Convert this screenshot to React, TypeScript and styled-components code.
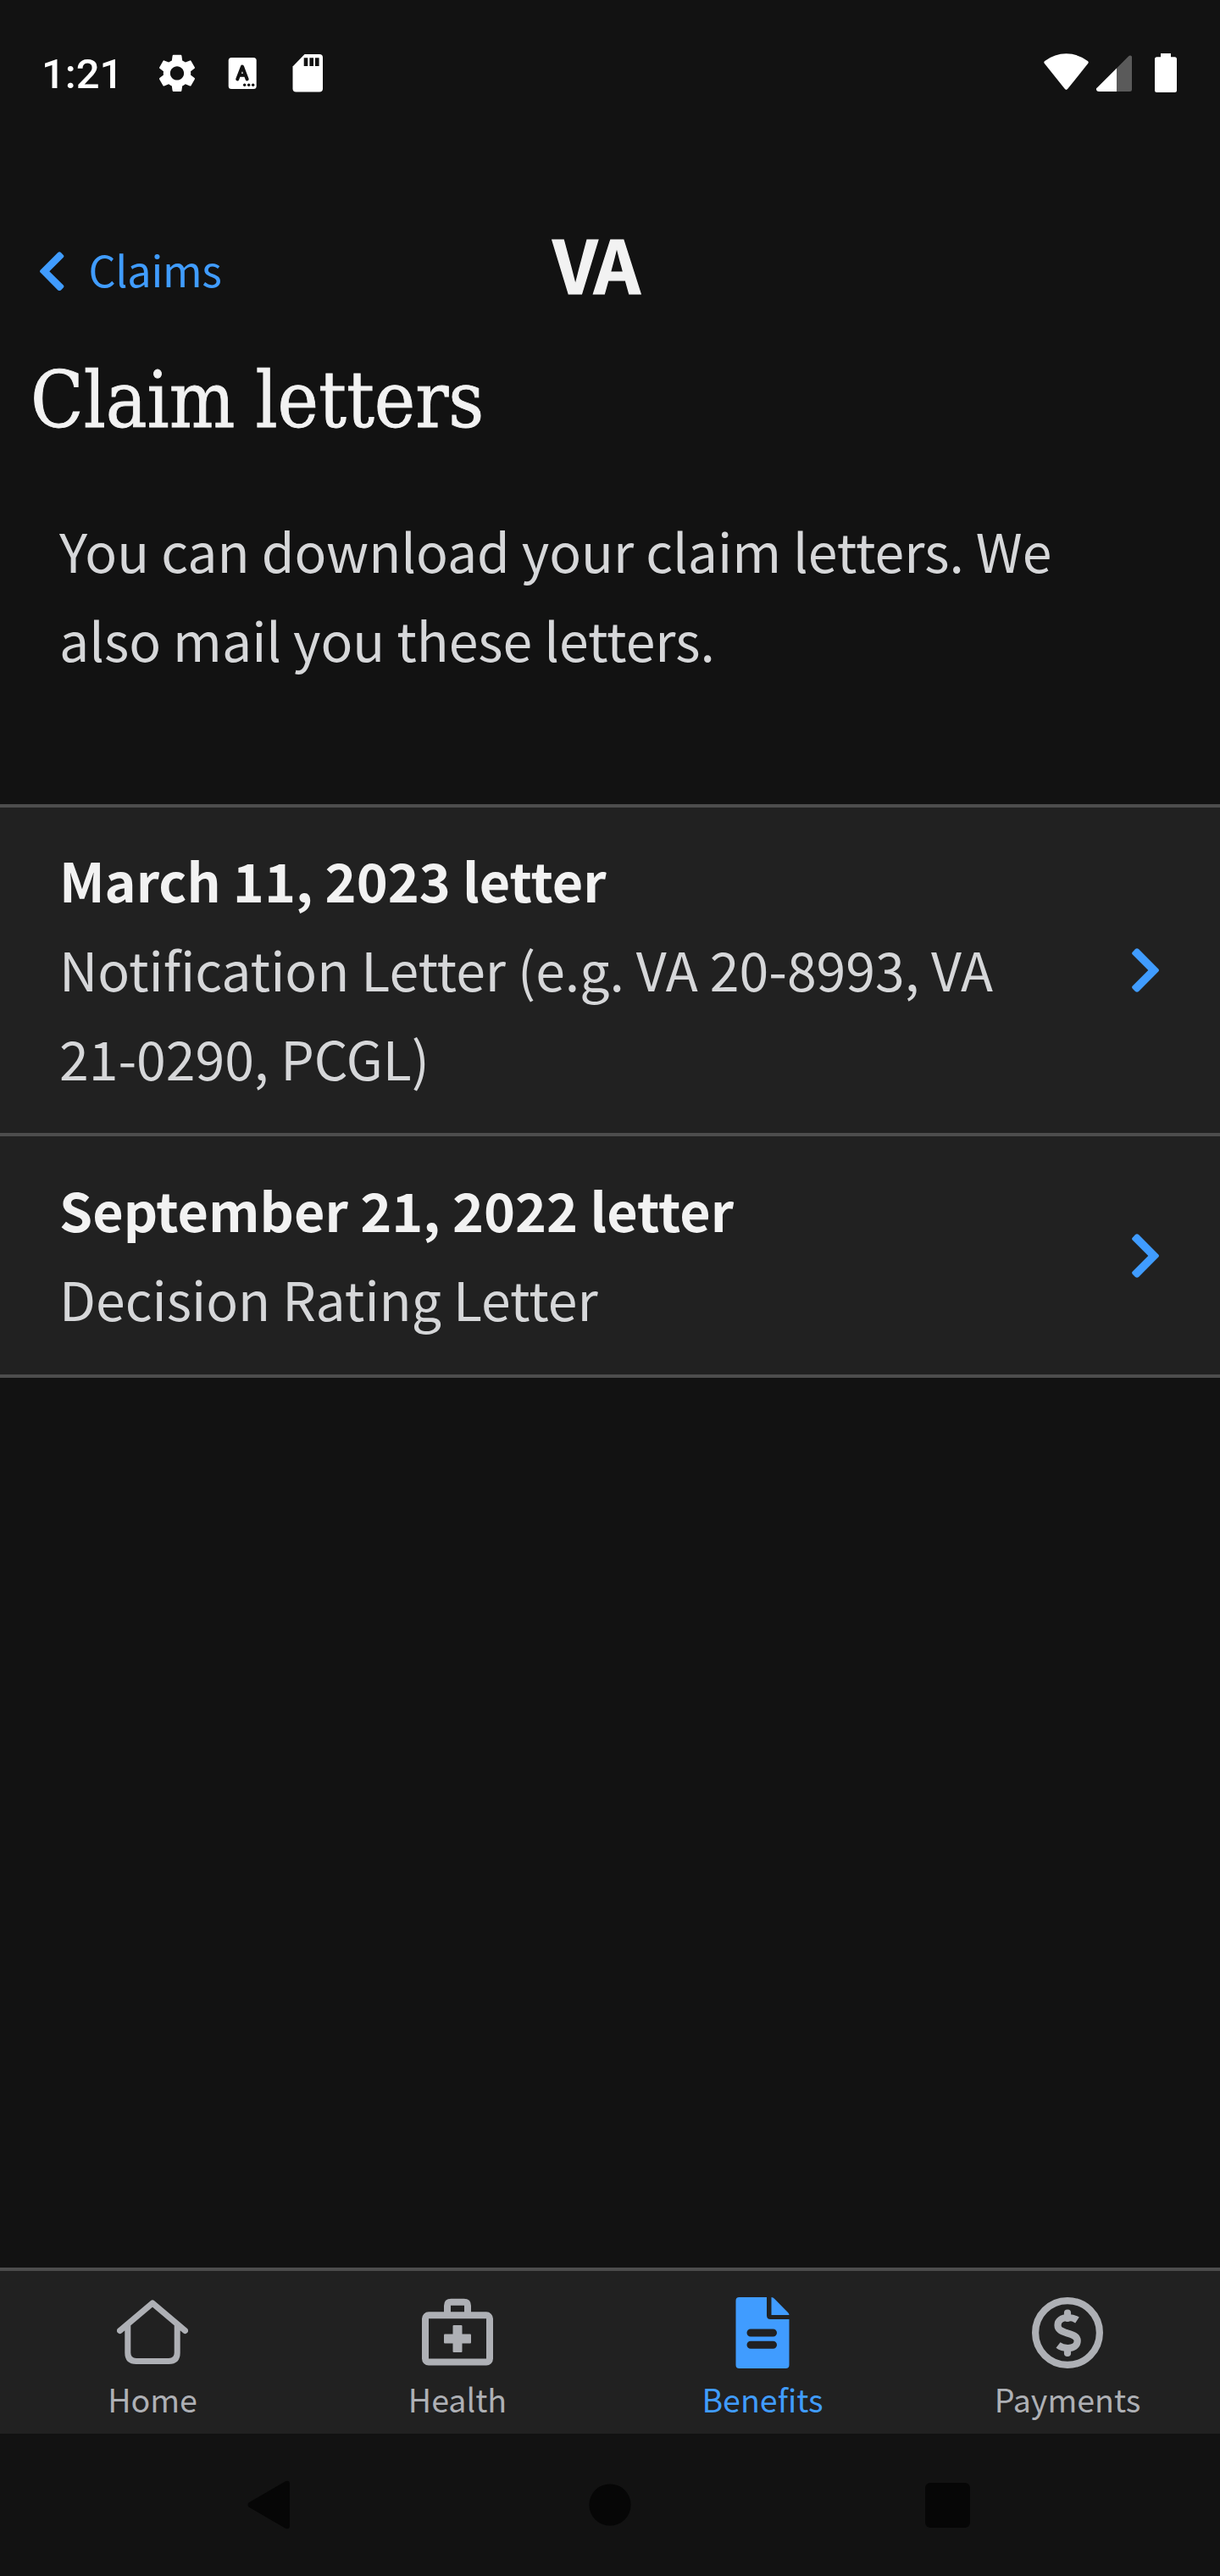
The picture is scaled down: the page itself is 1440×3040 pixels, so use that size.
import React from 'react';
import styled, { createGlobalStyle } from 'styled-components';

const color = {
  page: '#121212',
  surface: '#212121',
  line: '#4d4d4d',
  text: '#f2f2f2',
  body: '#d6d7d9',
  muted: '#aeb0b5',
  link: '#409cff',
  sys: '#060606',
};
const sans = '"Noto Sans CJK SC", "Noto Sans", sans-serif';

const Global = createGlobalStyle`
  html, body { margin: 0; background: ${color.page}; }
  * { box-sizing: border-box; }
  svg { display: block; flex: none; }
`;

const Screen = styled.div`
  width: 1440px;
  height: 3040px;
  display: flex;
  flex-direction: column;
  background: ${color.page};
  font-family: ${sans};
  color: ${color.text};
  overflow: hidden;
`;

const StatusBar = styled.div`
  height: 172px;
  flex: none;
  display: flex;
  align-items: flex-start;
  justify-content: space-between;
  padding: 60px 48px 0 49px;
`;
const StatusGroup = styled.div`
  display: flex;
`;
const Clock = styled.div`
  width: 133.3px;
  font: 500 49px/56px Roboto, sans-serif;
  color: #fff;
`;

const Header = styled.header`
  height: 228px;
  flex: none;
  display: grid;
  grid-template-columns: 1fr auto 1fr;
  padding: 92px 82px 0 47px;
`;
const Back = styled.a`
  display: flex;
  height: 100px;
  margin-top: 6px;
  align-items: center;
  color: ${color.link};
  font-size: 50.4px;
  letter-spacing: -0.3px;
  gap: 29px;
`;
const BackLabel = styled.span`
  line-height: 100px;
  margin-top: -5px;
`;
const Logo = styled.div`
  font-size: 86px;
  line-height: 92px;
  font-weight: 700;
  letter-spacing: -3px;
  -webkit-text-stroke: 1.2px ${color.text};
`;

const Title = styled.h1`
  margin: 0;
  height: 180px;
  flex: none;
  padding-left: 36px;
  font: 400 91px/146px "DejaVu Serif Condensed", "DejaVu Serif", serif;
  font-stretch: condensed;
  word-spacing: -2px;
  white-space: nowrap;
  -webkit-text-stroke: 0.8px ${color.text};
`;
const Intro = styled.p`
  margin: 0;
  height: 369px;
  flex: none;
  padding: 16px 150px 0 70px;
  font-size: 62.5px;
  line-height: 105px;
  color: ${color.body};
`;

const List = styled.div`
  flex: none;
  border-top: 4px solid ${color.line};
`;
const Row = styled.div<{ $height: number }>`
  height: ${(p) => p.$height}px;
  display: flex;
  align-items: center;
  justify-content: space-between;
  padding: 0 72px 0 70px;
  background: ${color.surface};
  border-bottom: 4px solid ${color.line};
`;
const RowText = styled.div`
  width: 1140px;
  padding-bottom: 5px;
  font-size: 62.5px;
  line-height: 105px;
  color: ${color.body};
`;
const RowTitle = styled.div`
  font-size: 62.8px;
  font-weight: 700;
  color: ${color.text};
`;
const Spacer = styled.div`
  flex: 1;
`;

const TabBar = styled.nav`
  height: 196px;
  flex: none;
  display: grid;
  grid-template-columns: repeat(4, 1fr);
  background: ${color.surface};
  border-top: 4px solid ${color.line};
`;
const Tab = styled.div<{ $active?: boolean }>`
  display: flex;
  flex-direction: column;
  align-items: center;
  padding-top: 31px;
  color: ${(p) => (p.$active ? color.link : color.muted)};
`;
const TabLabel = styled.span`
  margin-top: 6px;
  font-size: 37.6px;
  line-height: 60px;
`;

const SystemNav = styled.div`
  height: 168px;
  flex: none;
  display: flex;
  justify-content: space-between;
  align-items: center;
  padding: 0 295px 0 292px;
`;

const GearIcon = () => (
  <svg width="54" height="54" viewBox="0 0.25 24 24" fill="#fff">
    <path d="M19.14 12.94c.04-.3.06-.61.06-.94 0-.32-.02-.64-.07-.94l2.03-1.58c.18-.14.23-.41.12-.61l-1.92-3.32c-.12-.22-.37-.29-.59-.22l-2.39.96c-.5-.38-1.03-.7-1.62-.94l-.36-2.54c-.04-.24-.24-.41-.48-.41h-3.84c-.24 0-.43.17-.47.41l-.36 2.54c-.59.24-1.13.57-1.62.94l-2.39-.96c-.22-.08-.47 0-.59.22L2.74 8.87c-.12.21-.08.47.12.61l2.03 1.58c-.05.3-.09.63-.09.94s.02.64.07.94l-2.03 1.58c-.18.14-.23.41-.12.61l1.92 3.32c.12.22.37.29.59.22l2.39-.96c.5.38 1.03.7 1.62.94l.36 2.54c.05.24.24.41.48.41h3.84c.24 0 .44-.17.47-.41l.36-2.54c.59-.24 1.13-.56 1.62-.94l2.39.96c.22.08.47 0 .59-.22l1.92-3.32c.12-.22.07-.47-.12-.61l-2.01-1.58zM12 15.6c-1.98 0-3.6-1.62-3.6-3.6s1.62-3.6 3.6-3.6 3.6 1.62 3.6 3.6-1.62 3.6-3.6 3.6z" />
  </svg>
);
const KeyboardIcon = () => (
  <svg width="81.700" height="54" viewBox="-11.700 0 81.700 54">
    <rect x="22" y="8" width="33" height="37" rx="3.5" fill="#fff" />
    <path d="M32.5 33.5 38.3 18.5 44 33.5M34.5 28.8h7.6" fill="none" stroke="#121212" strokeWidth="4" strokeLinecap="round" strokeLinejoin="round" />
    <g fill="#121212">
      <circle cx="41" cy="40.3" r="1.7" />
      <circle cx="46" cy="40.3" r="1.7" />
      <circle cx="51" cy="40.3" r="1.7" />
    </g>
  </svg>
);
const SdIcon = () => (
  <svg width="77" height="54" viewBox="0 0 77 54">
    <path d="M41.5 4H59q4 0 4 4v36.500q0 4-4 4H31.500q-4 0-4-4V18.500z" fill="#fff" />
    <path d="M40.700 8.300h4.600v9.700h-4.600zM47.400 8.300h4.600v9.700h-4.600zM54 8.300h4.600v9.700h-4.600z" fill="#121212" />
  </svg>
);
const SignalIcons = () => (
  <svg width="160" height="54" viewBox="0 0 160 54" fill="#fff">
    <path d="M0.700 14.800Q-0.400 13.200 1.200 12Q13 3.300 26.500 3.300T51.800 12Q53.400 13.200 52.300 14.800L28.300 44.800Q26.500 47 24.700 44.800z" />
    <path d="M86 20.500 99.700 6.800Q101.500 5 103 5.800T104 8V45.500Q104 48 101.500 48H86z" fill="#5a5a5a" />
    <path d="M86 20.500V48H65Q62.500 48 62 46T63.200 43.200z" />
    <path d="M138 3h12v4.300h4.500q2.500 0 2.500 2.500V46.500q0 2.500-2.500 2.500h-21q-2.500 0-2.500-2.500V9.800q0-2.500 2.500-2.500H138z" />
  </svg>
);
const chevron =
  'M4 1Q6-.5 8 1L31.300 24.500Q32.700 26 31.300 27.500L8 51Q6 52.500 4 51L.8 47.800Q-.7 46 .8 44.500L19.300 26 .8 7.500Q-.7 6 .8 4.500z';
const BackChevron = () => (
  <svg width="28.500" height="46.300" viewBox="0 0 32 52" fill={color.link}>
    <path d={chevron} transform="translate(32 0) scale(-1 1)" />
  </svg>
);
const RowChevron = () => (
  <svg width="32" height="52" viewBox="0 0 32 52" fill={color.link}>
    <path d={chevron} />
  </svg>
);
const HomeIcon = () => (
  <svg width="84" height="84" viewBox="0 0 84 84" fill="none" stroke="currentColor" strokeWidth="7" strokeLinecap="round" strokeLinejoin="round">
    <path d="M3.500 39.500 42 7 80.500 39.500M12.800 33V65.500Q12.800 75.500 22.800 75.500H61.200Q71.200 75.500 71.200 65.500V33" />
  </svg>
);
const HealthIcon = () => (
  <svg width="84" height="84" viewBox="0 0 84 84" fill="none" stroke="currentColor" strokeWidth="8">
    <rect x="4" y="21.300" width="76" height="55.200" rx="4" />
    <path d="M30 20V10Q30 5.700 34.500 5.700H49.500Q54 5.700 54 10V20" />
    <g fill="currentColor" stroke="none">
      <rect x="36.500" y="33" width="11" height="32" rx="1" />
      <rect x="26" y="43.500" width="32" height="11" rx="1" />
    </g>
  </svg>
);
const BenefitsIcon = () => (
  <svg width="64" height="84" viewBox="0 0 64 84" fill="currentColor">
    <path d="M4 0H37V21.500Q37 26 41.500 26H63.500V80q0 4-4 4H4.500q-4 0-4-4V4q0-4 4-4z" />
    <path d="M42.500 0Q44.500 0 46 1.800L62 18Q63.500 19.500 63.500 21H42.500z" />
    <path d="M18 42H44.500M18 56.300H44.500" stroke={color.surface} strokeWidth="9" strokeLinecap="round" />
  </svg>
);
const PaymentsIcon = () => (
  <svg width="84" height="84" viewBox="0 0 84 84" fill="none" stroke="currentColor" strokeWidth="8.200">
    <circle cx="42" cy="42" r="37.900" />
    <path d="M42 18.500V25M42 60V66" strokeLinecap="round" />
    <path d="M53.500 27Q49 24 43 24C35 24 30.500 27.500 30.500 33C30.500 38.500 34.500 40 42 42.500C49.500 44.500 53.700 46.500 53.700 51.500C53.700 57 49 60 42.500 60Q35.500 60 31 56.500" />
  </svg>
);

const letters = [
  { title: 'March 11, 2023 letter', detail: 'Notification Letter (e.g. VA 20-8993, VA 21-0290, PCGL)', height: 388 },
  { title: 'September 21, 2022 letter', detail: 'Decision Rating Letter', height: 285 },
];
const tabs = [
  { label: 'Home', Icon: HomeIcon },
  { label: 'Health', Icon: HealthIcon },
  { label: 'Benefits', Icon: BenefitsIcon, active: true },
  { label: 'Payments', Icon: PaymentsIcon },
];

export default function App() {
  return (
    <Screen>
      <Global />
      <StatusBar>
        <StatusGroup>
          <Clock>1:21</Clock>
          <GearIcon />
          <KeyboardIcon />
          <SdIcon />
        </StatusGroup>
        <SignalIcons />
      </StatusBar>
      <Header>
        <Back>
          <BackChevron />
          <BackLabel>Claims</BackLabel>
        </Back>
        <Logo>VA</Logo>
      </Header>
      <Title>Claim letters</Title>
      <Intro>You can download your claim letters. We also mail you these letters.</Intro>
      <List>
        {letters.map((l) => (
          <Row key={l.title} $height={l.height}>
            <RowText>
              <RowTitle>{l.title}</RowTitle>
              {l.detail}
            </RowText>
            <RowChevron />
          </Row>
        ))}
      </List>
      <Spacer />
      <TabBar>
        {tabs.map(({ label, Icon, active }) => (
          <Tab key={label} $active={active}>
            <Icon />
            <TabLabel>{label}</TabLabel>
          </Tab>
        ))}
      </TabBar>
      <SystemNav>
        <svg width="50" height="58" viewBox="0 0 50 58" fill={color.sys}>
          <path d="M1.500 26.500 44.500 1.500Q49.500-1 50 4V54Q49.500 59 44.500 56.500L1.500 31.500Q-.5 29 1.500 26.500z" />
        </svg>
        <svg width="55" height="50" viewBox="-5 0 55 50" fill={color.sys}>
          <circle cx="25" cy="25" r="24.600" />
        </svg>
        <svg width="53" height="53" viewBox="0 0 53 53" fill={color.sys}>
          <rect width="53" height="53" rx="6" />
        </svg>
      </SystemNav>
    </Screen>
  );
}
